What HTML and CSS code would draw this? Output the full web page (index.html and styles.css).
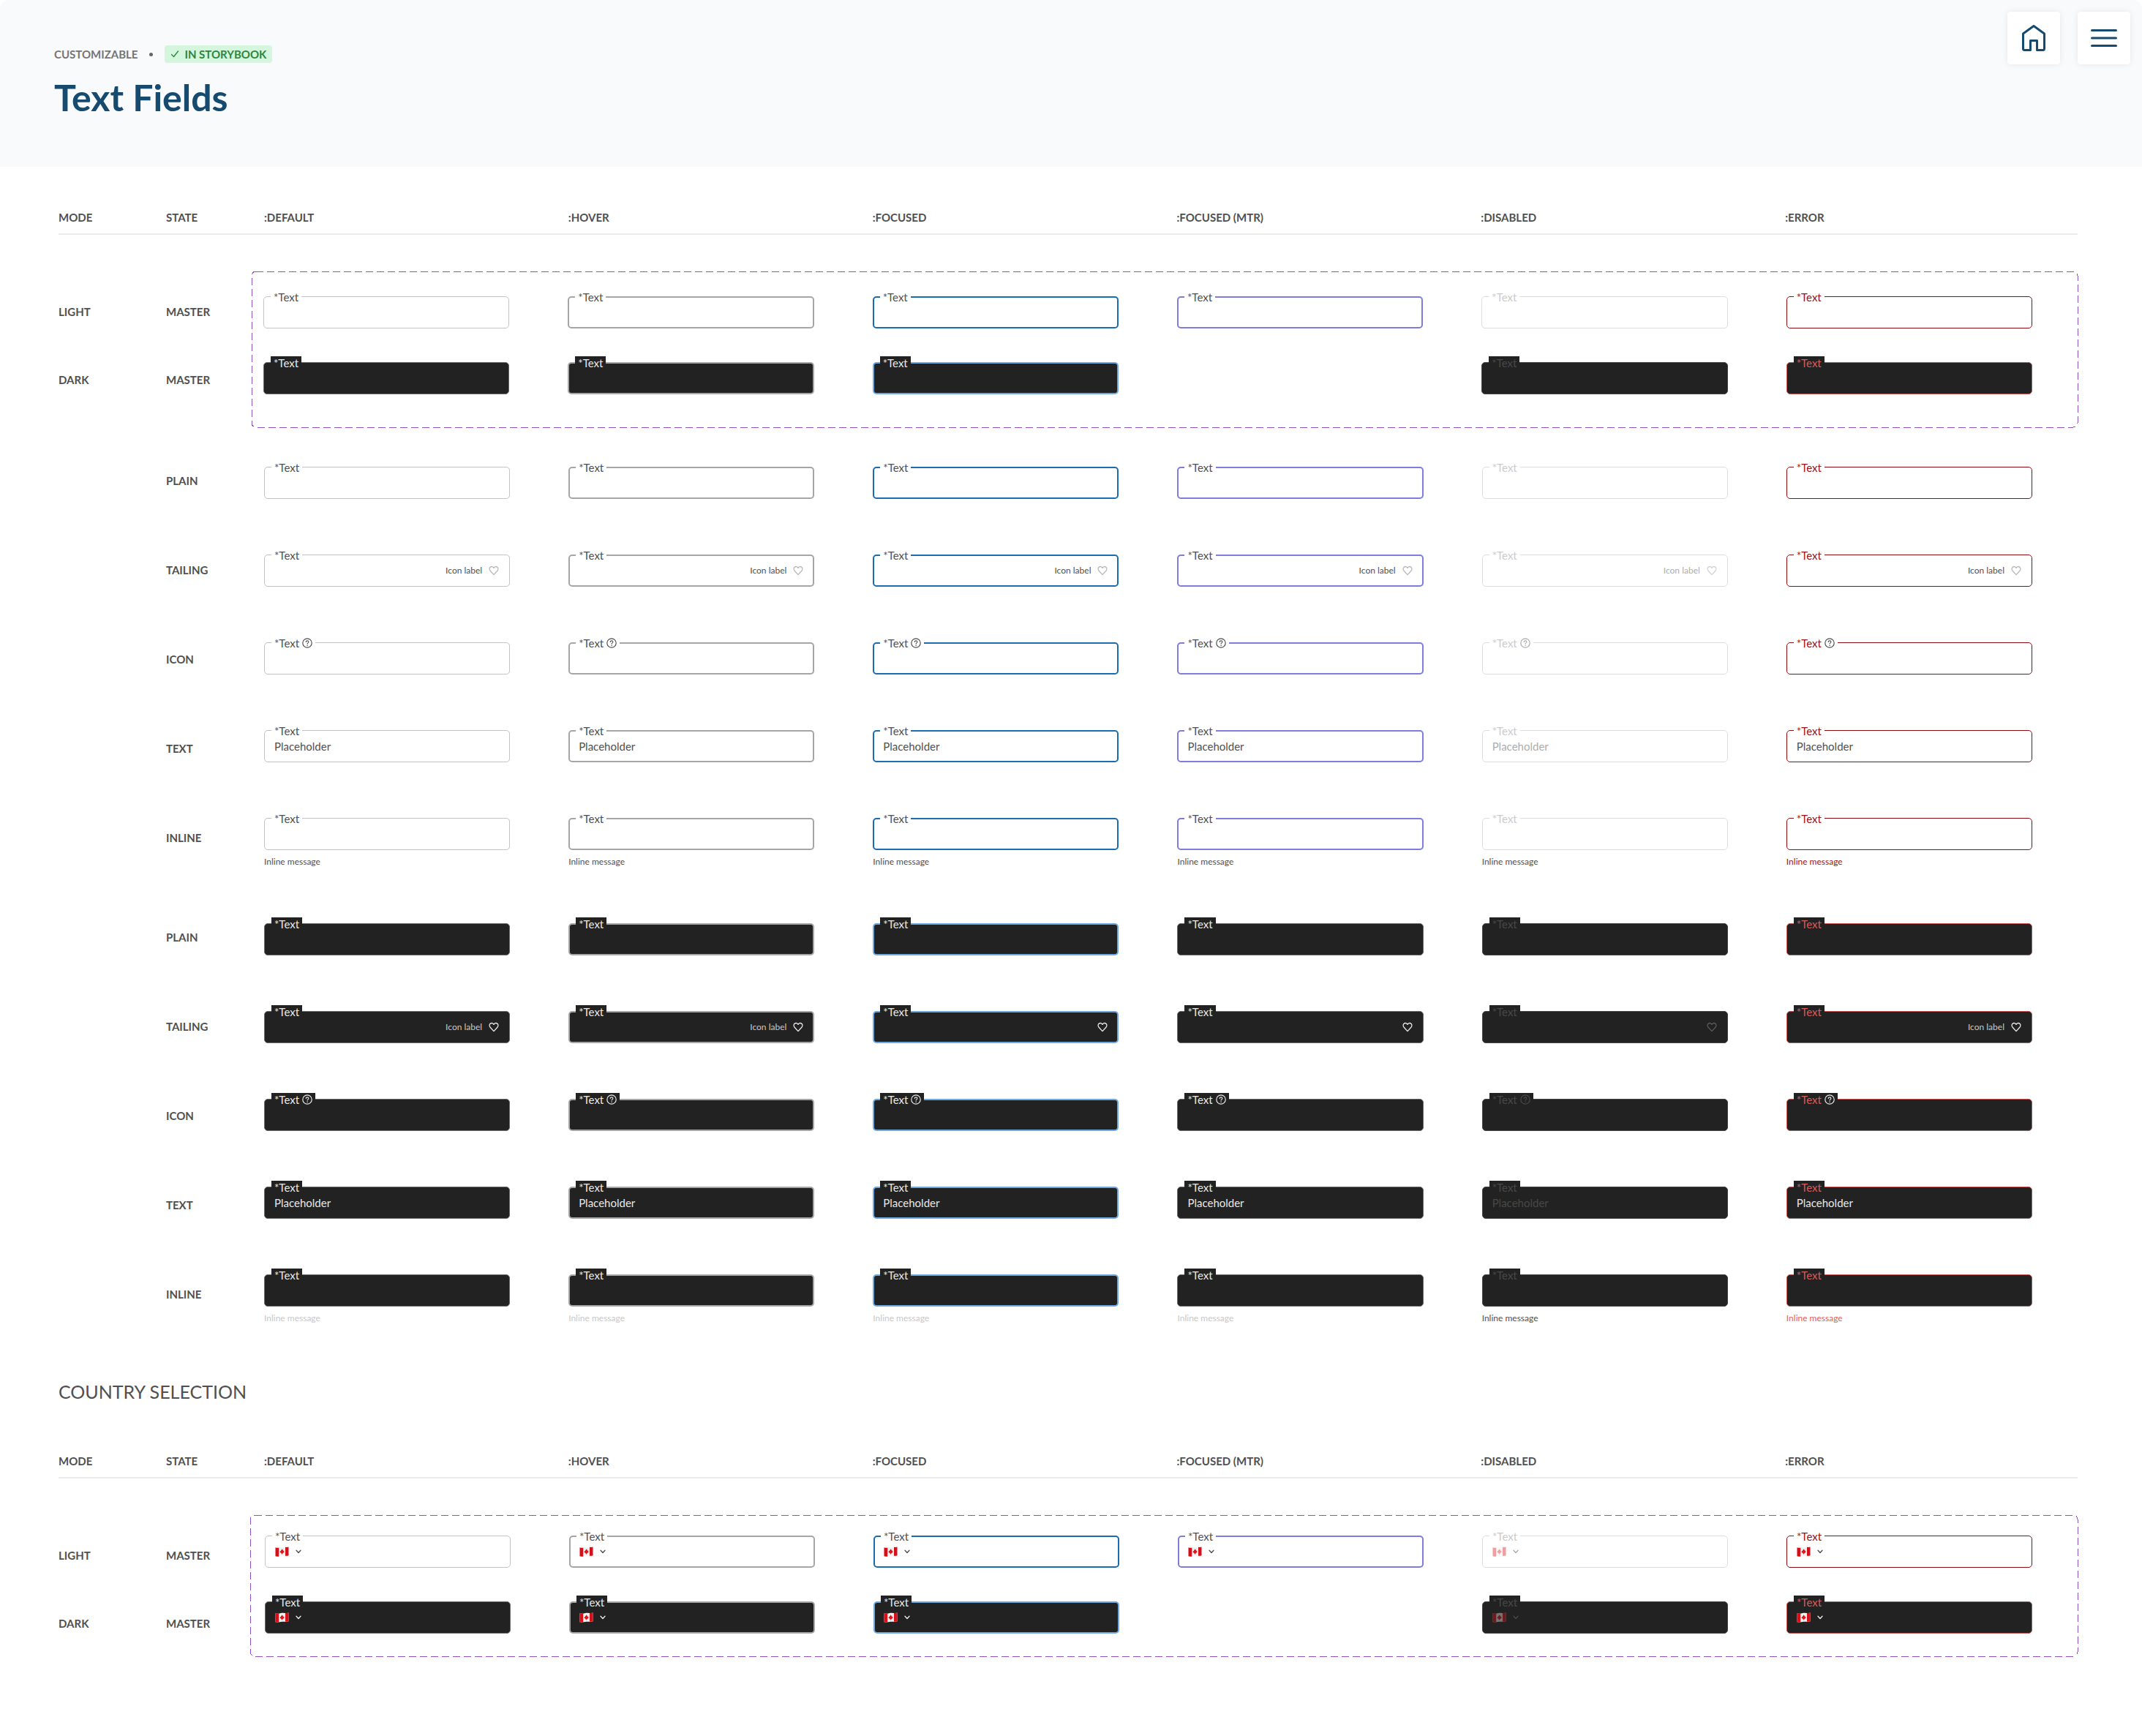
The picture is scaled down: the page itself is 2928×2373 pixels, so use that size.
FILE: index.html
```html
<!DOCTYPE html>
<html lang="en">
<head>
<meta charset="utf-8">
<meta name="viewport" content="width=device-width, initial-scale=1">
<title>Text Fields</title>
<link rel="stylesheet" href="styles.css">
</head>
<body>
<svg class="sprite" aria-hidden="true">
  <symbol id="heart" viewBox="0 0 14 14">
    <path d="M7 12.6 2.1 7.2C.6 5.5.8 3.1 2.3 2.1 3.9 1 6 1.500 7 3.400 8 1.500 10.100 1 11.700 2.100c1.500 1 1.700 3.400.2 5.100z" fill="none" stroke="currentColor" stroke-width="1.300" stroke-linejoin="round"/>
  </symbol>
  <symbol id="help" viewBox="0 0 14 14">
    <circle cx="7" cy="7" r="6.200" fill="none" stroke="currentColor" stroke-width="1.200"/>
    <path d="M5.200 5.600c0-2.400 3.700-2.300 3.700 0 0 1.300-1.800 1.300-1.800 2.500" fill="none" stroke="currentColor" stroke-width="1.100" stroke-linecap="round"/>
    <circle cx="7.100" cy="10.200" r=".8" fill="currentColor"/>
  </symbol>
  <symbol id="chevron" viewBox="0 0 8 6">
    <path d="M1 1.200 4 4.400 7 1.200" fill="none" stroke="currentColor" stroke-width="1.400" stroke-linecap="round" stroke-linejoin="round"/>
  </symbol>
  <symbol id="flag" viewBox="0 0 19 14">
    <path d="M.5 1.300C3.500 2.600 6 1.200 9.500.8s6.500.8 9-.3v11.800c-3 1.200-5.500.1-9 .5s-6 1.500-9 .5z" fill="#f1f1f1"/>
    <path d="M.5 1.300C2.300 2 3.700 1.900 5.200 1.600v11.900c-1.700.3-3.200.3-4.700-.2zM14 .8c1.600.1 3.100.2 4.500-.3v11.800c-1.500.6-3 .6-4.500.5z" fill="#d80f16"/>
    <path d="m9.600 3.300.9 1.500.8-.3-.2 1.700 1.400-.6-.3 1.200.6.4-2 1.700.1.700-1-.1v1.400h-.5V9.500l-1.100.2.100-.7-2-1.500.6-.5-.3-1.100 1.400.4-.2-1.700.8.300z" fill="#e0161d"/>
  </symbol>
</svg>

<header class="hero">
  <div>
    <div class="crumbs">
      <span>CUSTOMIZABLE</span>
      <span class="crumbs__dot"></span>
      <span class="badge">
        <svg class="badge__icon" viewBox="0 0 12 12" aria-hidden="true"><path d="m1.500 6.500 3 3 6-7.500" fill="none" stroke="currentColor" stroke-width="1.300" stroke-linecap="round" stroke-linejoin="round"/></svg>
        IN STORYBOOK
      </span>
    </div>
    <h1 class="hero__title">Text Fields</h1>
  </div>
  <nav class="tools">
    <button class="tool" type="button" aria-label="Home">
      <svg class="tool__icon" viewBox="0 0 48 48" aria-hidden="true"><path d="M9.500 18 24 7.500 38.500 18v20.500a2 2 0 0 1-2 2H28.500v-13h-9v13h-8a2 2 0 0 1-2-2z" fill="none" stroke="currentColor" stroke-width="3" stroke-linejoin="round"/></svg>
    </button>
    <button class="tool" type="button" aria-label="Menu">
      <svg class="tool__icon" viewBox="0 0 48 48" aria-hidden="true"><path d="M7.500 13.500h33M7.500 24h33M7.500 34.500h33" fill="none" stroke="currentColor" stroke-width="3" stroke-linecap="round"/></svg>
    </button>
  </nav>
</header>

<main class="page">
  <section class="section">
    <div class="columns">
      <span>MODE</span><span>STATE</span><span>:DEFAULT</span><span>:HOVER</span><span>:FOCUSED</span><span>:FOCUSED (MTR)</span><span>:DISABLED</span><span>:ERROR</span>
    </div>
    <div class="block block--master">
      <div class="rail">
        <span>LIGHT</span><span>MASTER</span>
        <span>DARK</span><span>MASTER</span>
      </div>
      <div class="board">
        <svg class="board__outline" aria-hidden="true"><rect width="100%" height="100%" rx="6"/></svg>
        <div class="fields" data-rows="light:plain dark:plain" data-skip="dark:mtr"></div>
      </div>
    </div>
    <div class="block block--variants">
      <div class="states">
        <ul class="states__group"><li>PLAIN</li><li>TAILING</li><li>ICON</li><li>TEXT</li><li>INLINE</li></ul>
        <ul class="states__group"><li>PLAIN</li><li>TAILING</li><li>ICON</li><li>TEXT</li><li>INLINE</li></ul>
      </div>
      <div class="fields" data-rows="light:plain light:tailing light:icon light:text light:inline dark:plain dark:tailing dark:icon dark:text dark:inline"></div>
    </div>
  </section>

  <section class="section section--country">
    <h2 class="section__title">COUNTRY SELECTION</h2>
    <div class="columns">
      <span>MODE</span><span>STATE</span><span>:DEFAULT</span><span>:HOVER</span><span>:FOCUSED</span><span>:FOCUSED (MTR)</span><span>:DISABLED</span><span>:ERROR</span>
    </div>
    <div class="block block--master">
      <div class="rail">
        <span>LIGHT</span><span>MASTER</span>
        <span>DARK</span><span>MASTER</span>
      </div>
      <div class="board">
        <svg class="board__outline" aria-hidden="true"><rect width="100%" height="100%" rx="6"/></svg>
        <div class="fields" data-rows="light:country dark:country" data-skip="dark:mtr"></div>
      </div>
    </div>
  </section>
</main>
<script src="fields.js"></script>
</body>
</html>
```

FILE: styles.css
```css
* {
  box-sizing: border-box;
}

body {
  margin: 0;
  background: #fff;
  color: #505050;
  font-family: Lato, "Open Sans", sans-serif;
  font-size: 15px;
  line-height: 20px;
}

.sprite {
  display: none;
}

/* Page header */
.hero {
  display: flex;
  justify-content: space-between;
  align-items: flex-start;
  min-height: 228px;
  padding: 16px 16px 0 74px;
  border-radius: 12px 12px 0 0;
  background: #f8fafc;
}

.crumbs {
  display: flex;
  align-items: center;
  margin-top: 46px;
  color: #757575;
  font-weight: 700;
  line-height: 24px;
}

.crumbs__dot {
  width: 5px;
  height: 5px;
  margin: 0 16px;
  border-radius: 50%;
  background: #666;
}

.badge {
  display: flex;
  align-items: center;
  gap: 7px;
  padding: 0 8px;
  border-radius: 4px;
  background: #d3f6dc;
  color: #2c8541;
}

.badge__icon {
  width: 12px;
  height: 12px;
}

.hero__title {
  margin: 15px 0 0;
  color: #164a6e;
  font-size: 50px;
  font-weight: 700;
  line-height: 64px;
}

.tools {
  display: flex;
  gap: 24px;
}

.tool {
  display: grid;
  place-items: center;
  width: 72px;
  height: 72px;
  padding: 0;
  border: 0;
  border-radius: 4px;
  background: #fff;
  box-shadow: 0 0 8px rgba(0, 0, 0, 0.08);
  color: #164a6e;
}

.tool__icon {
  width: 48px;
  height: 48px;
}

/* Sections */
.page {
  padding: 59px 88px 109px 80px;
}

.section {
  --rail: 264px;
}

.section--country {
  --rail: 262px;
  margin-top: 76px;
}

.section__title {
  margin: 0 0 69px;
  font-size: 25px;
  font-weight: 400;
  line-height: 32px;
}

.columns {
  display: grid;
  grid-template-columns: 67px 54px repeat(6, 1fr);
  gap: 80px;
  padding: 0 64px 12px 0;
  border-bottom: 2px solid #ebebeb;
  font-weight: 700;
  white-space: nowrap;
}

.block {
  display: grid;
  grid-template-columns: var(--rail) 1fr;
}

.block--master {
  margin-top: 50px;
}

.block--variants {
  margin-top: 54px;
}

.rail {
  display: grid;
  grid-template-columns: 147px 1fr;
  align-content: start;
  row-gap: 73px;
  padding-top: 45px;
  font-weight: 700;
}

.states {
  display: flex;
  flex-direction: column;
  gap: 116px;
  padding: 9px 0 0 147px;
  font-weight: 700;
}

.states__group {
  display: flex;
  flex-direction: column;
  gap: 102px;
  margin: 0;
  padding: 0;
  list-style: none;
}

.board {
  position: relative;
  padding: 34px 62px 45px 16px;
}

.section--country .board {
  padding: 28px 62px 31px 20px;
}

.board__outline {
  position: absolute;
  inset: 0;
  width: 100%;
  height: 100%;
  overflow: visible;
  pointer-events: none;
}

.board__outline rect {
  fill: none;
  stroke: #9050c0;
  stroke-width: 1px;
  stroke-dasharray: 10 5;
  shape-rendering: crispEdges;
}

.fields {
  display: grid;
  grid-template-columns: repeat(6, 1fr);
  gap: 76px 80px;
  align-items: start;
}

.board .fields {
  row-gap: 46px;
}

.block--variants .fields {
  padding: 0 62px 0 17px;
}

/* Text field */
.field {
  --surface: #fff;
  --text: #505050;
  --label: #505050;
  --line: #c4c4c4;
  --icon: #b8b8b8;
  --message: #505050;
  --stroke: 1px;
  position: relative;
}

.field--hover {
  --line: #a6a6a6;
  --stroke: 2px;
}

.field--focused {
  --line: #1a6bb0;
  --stroke: 2px;
}

.field--mtr {
  --line: #7f7dd9;
  --stroke: 2px;
}

.field--disabled {
  --line: #dedede;
  --label: #cbcbcb;
  --text: #adadad;
  --icon: #d2d2d2;
}

.field--error {
  --line: #8c0c12;
  --label: #96141a;
  --message: #96141a;
}

.field--dark {
  --surface: #222;
  --text: #e8e8e8;
  --label: #e8e8e8;
  --line: #6c6c6c;
  --icon: #e8e8e8;
  --message: #c8c8c8;
}

.field--dark.field--hover {
  --line: #a6a6a6;
}

.field--dark.field--focused {
  --line: #6ea8e0;
}

.field--dark.field--mtr {
  --stroke: 1px;
}

.field--dark.field--disabled {
  --line: #444;
  --label: #484848;
  --text: #484848;
  --icon: #5a5a5a;
  --message: #505050;
}

.field--dark.field--error {
  --line: #c45553;
  --label: #d65c5b;
  --message: #dd605f;
}

.field__label {
  position: absolute;
  top: -8px;
  left: 10px;
  display: flex;
  align-items: center;
  gap: 4px;
  height: 18px;
  padding: 0 4px;
  background: var(--surface);
  color: var(--label);
  line-height: 18px;
}

.field__help {
  width: 14px;
  height: 14px;
  color: var(--text);
}

.field__control {
  display: flex;
  align-items: center;
  gap: 9px;
  height: 44px;
  padding: 0 calc(15px - var(--stroke)) 0 calc(14px - var(--stroke));
  border: var(--stroke) solid var(--line);
  border-radius: 5px;
  background: var(--surface);
  color: var(--text);
}

.field__input {
  flex: 1;
  min-width: 0;
  height: 20px;
  padding: 0;
  border: 0;
  outline: 0;
  background: none;
  color: inherit;
  font: inherit;
}

.field__input::placeholder {
  color: inherit;
  opacity: 1;
}

.field__hint {
  font-size: 12px;
}

.field--dark .field__hint {
  color: #c8c8c8;
}

.field__heart {
  width: 14px;
  height: 14px;
  color: var(--icon);
}

.field__message {
  margin: 8px 0 0;
  color: var(--message);
  font-size: 12px;
  line-height: 16px;
}

.country {
  position: relative;
  display: flex;
  align-items: center;
  gap: 9px;
}

.country__flag {
  width: 19px;
  height: 14px;
}

.field--disabled .country__flag {
  opacity: 0.4;
}

.country__chevron {
  width: 8px;
  height: 6px;
}

.country__select {
  position: absolute;
  inset: 0;
  width: 100%;
  opacity: 0;
}
```

FILE: fields.js
```js
const STATES = ["default", "hover", "focused", "mtr", "disabled", "error"];
let count = 0;

function icon(name, className) {
  return `<svg class="${className}" aria-hidden="true"><use href="#${name}"/></svg>`;
}

function field(mode, variant, state) {
  const id = `field-${++count}`;
  const off = state === "disabled" ? " disabled" : "";
  const hintHidden = mode === "dark" && ["focused", "mtr", "disabled"].includes(state);
  const help = variant === "icon" ? icon("help", "field__help") : "";
  const country = variant === "country"
    ? `<span class="country">${icon("flag", "country__flag")}${icon("chevron", "country__chevron")}
         <select class="country__select" aria-label="Country"${off}><option>Canada</option></select></span>`
    : "";
  const hint = hintHidden ? "" : `<span class="field__hint">Icon label</span>`;
  const tail = variant === "tailing" ? hint + icon("heart", "field__heart") : "";
  const placeholder = variant === "text" ? ` placeholder="Placeholder"` : "";
  const message = variant === "inline" ? `<p class="field__message">Inline message</p>` : "";
  return `<div class="field field--${mode} field--${state}">
    <div class="field__control">${country}<input class="field__input" id="${id}" type="text"${placeholder}${off}>${tail}</div>
    <label class="field__label" for="${id}">*Text${help}</label>${message}
  </div>`;
}

document.querySelectorAll(".fields").forEach((grid) => {
  const { rows, skip } = grid.dataset;
  grid.innerHTML = rows.split(" ").map((row) => {
    const [mode, variant] = row.split(":");
    return STATES.map((state) =>
      skip === `${mode}:${state}` ? "<span></span>" : field(mode, variant, state)
    ).join("");
  }).join("");
});
```
